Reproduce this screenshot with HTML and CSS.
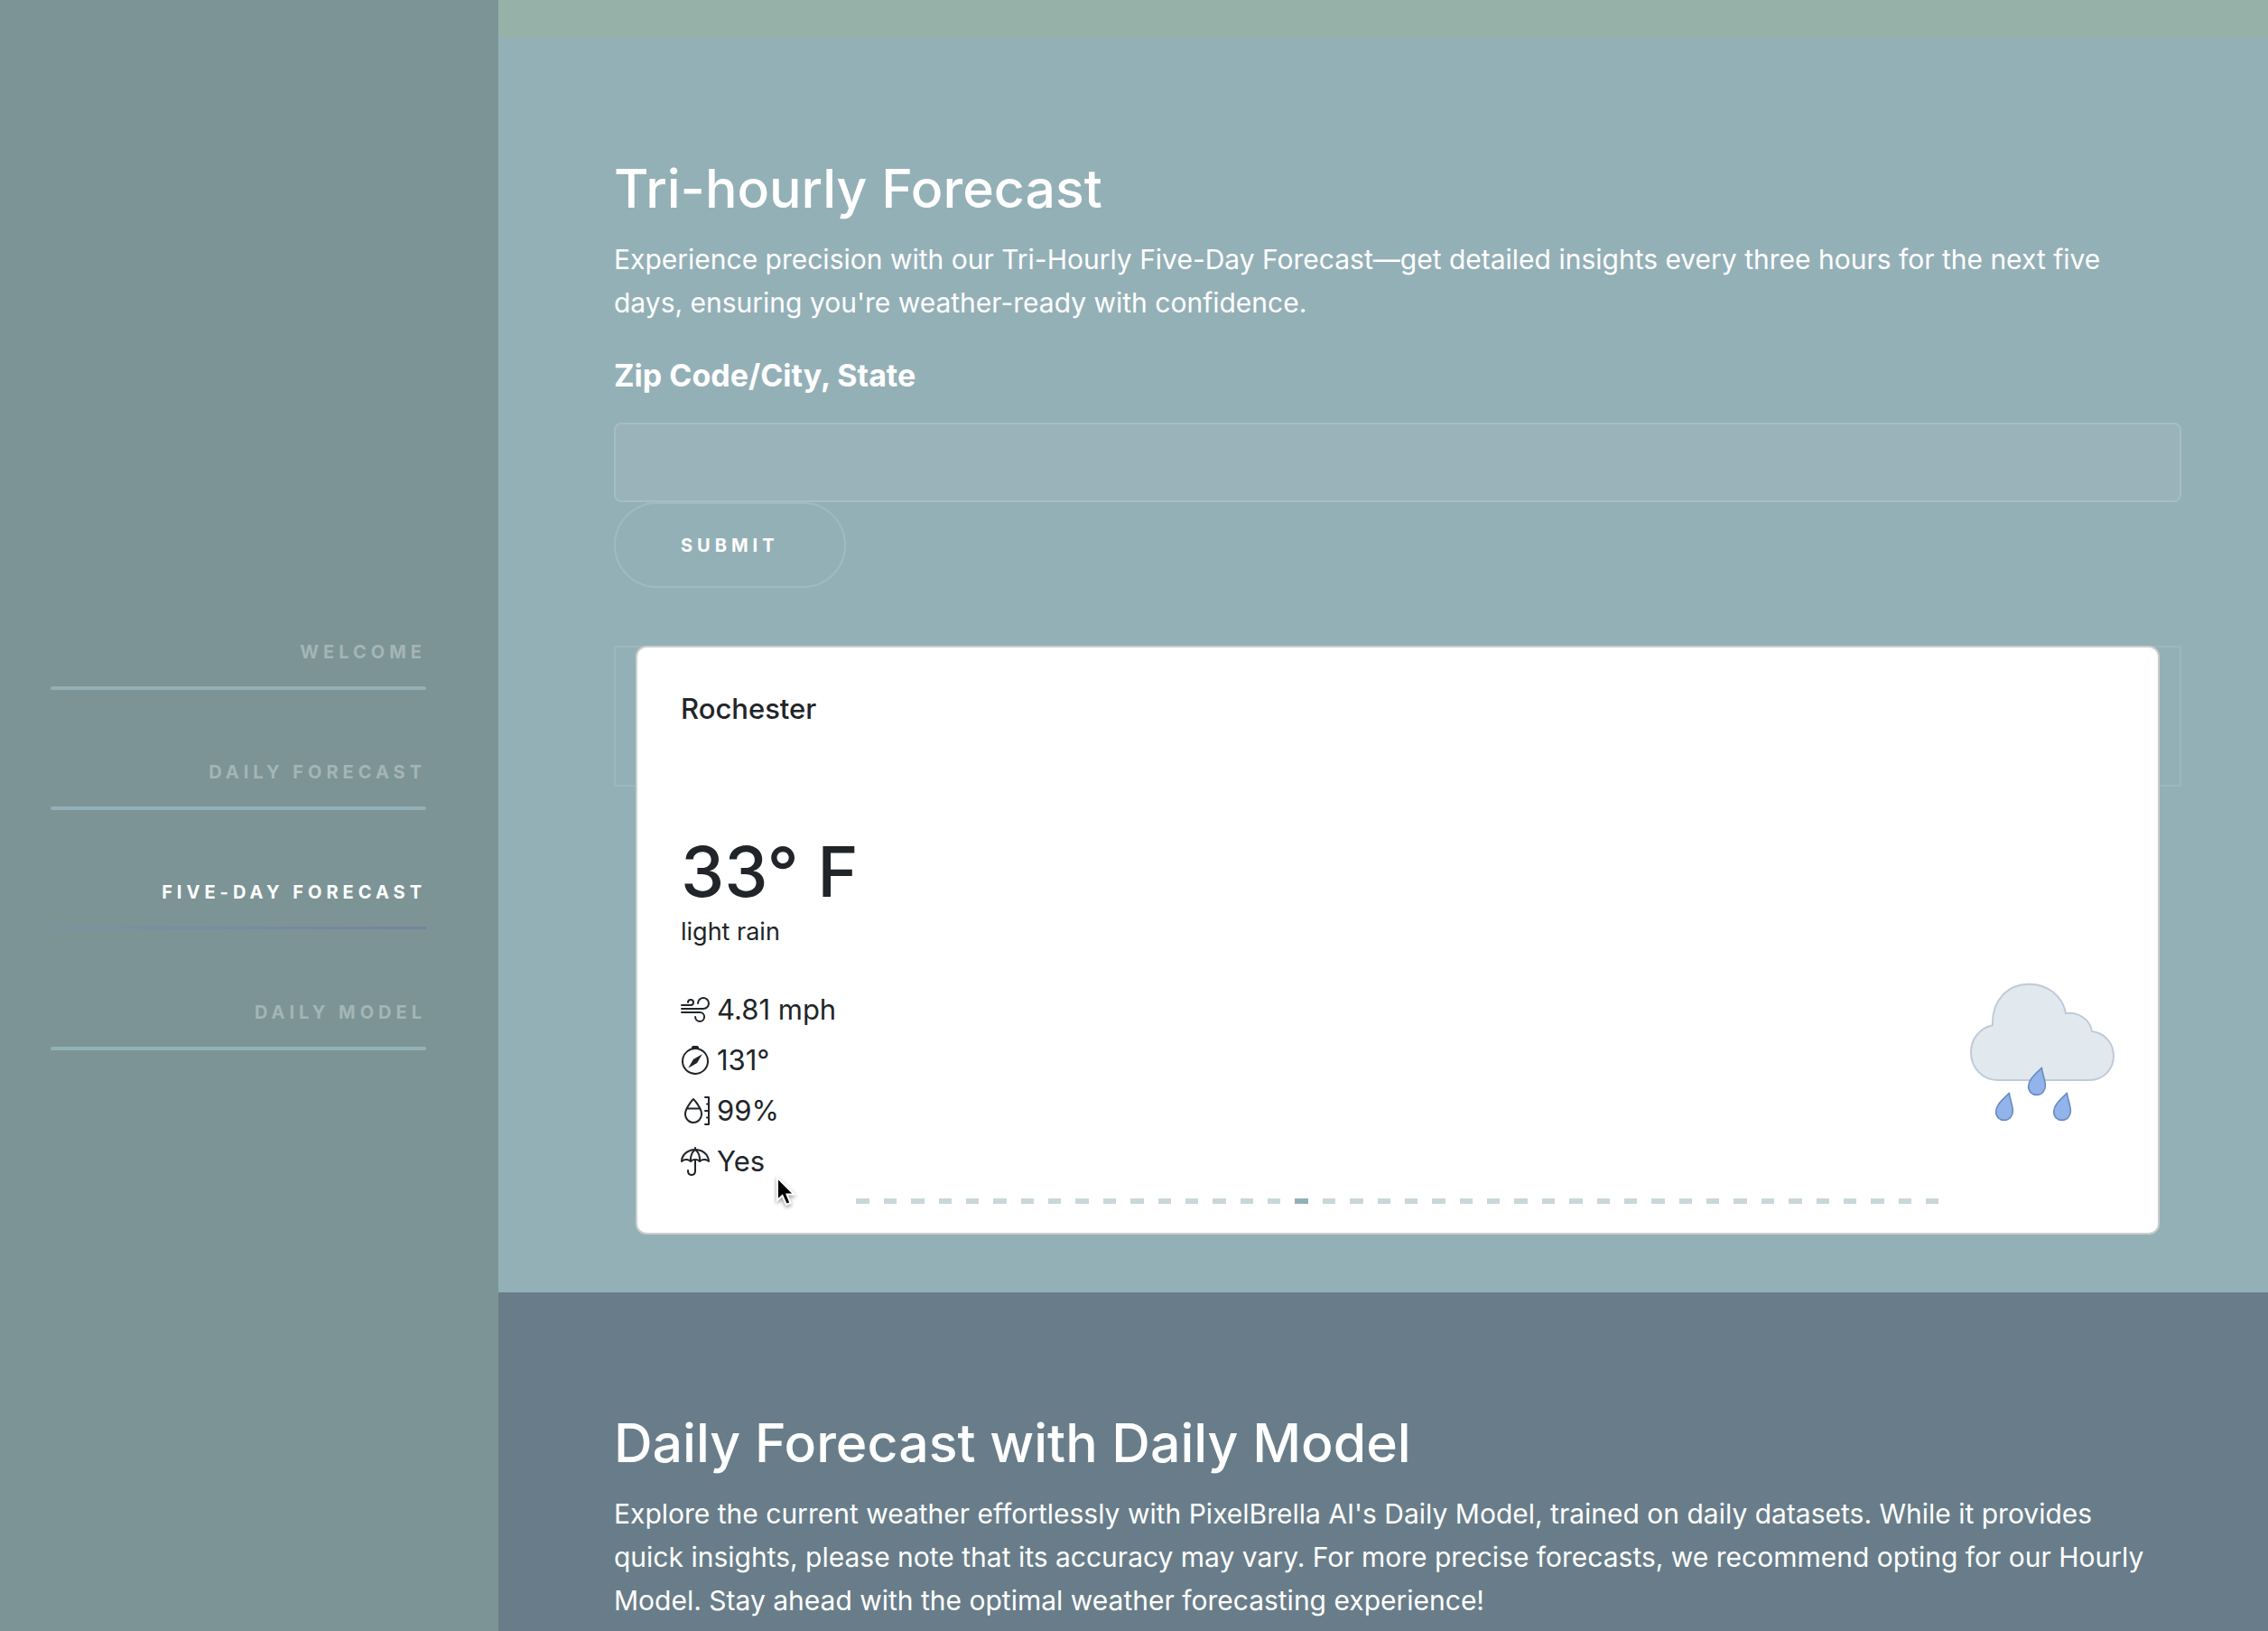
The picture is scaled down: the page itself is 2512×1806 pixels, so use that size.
FILE: index.html
```html
<!DOCTYPE html>
<html lang="en">
<head>
<meta charset="utf-8">
<title>PixelBrella AI</title>
<link rel="stylesheet" href="styles.css">
</head>
<body>
<div class="layout">
  <aside class="sidebar">
    <nav class="nav">
      <a class="nav-link" href="#welcome">Welcome</a>
      <a class="nav-link" href="#daily">Daily Forecast</a>
      <a class="nav-link active" href="#five-day">Five-Day Forecast</a>
      <a class="nav-link" href="#model">Daily Model</a>
    </nav>
  </aside>
  <main class="main">
    <div class="previous"></div>
    <section class="section five-day" id="five-day">
      <h2 class="title">Tri-hourly Forecast</h2>
      <p class="lead">Experience precision with our Tri-Hourly Five-Day Forecast—get detailed insights every three hours for the next five<br> days, ensuring you're weather-ready with confidence.</p>
      <form class="search">
        <label class="search-label" for="place">Zip Code/City, State</label>
        <input class="search-input" id="place" type="text">
        <button class="search-button" type="button">Submit</button>
      </form>
      <div class="results">
        <article class="card">
          <div class="card-info">
            <h3 class="city">Rochester</h3>
            <p class="temperature">33° F</p>
            <p class="conditions">light rain</p>
            <ul class="stats">
              <li class="stat">
                <svg class="stat-icon" viewBox="0 0 16 16" aria-hidden="true"><path d="M12.5 2A2.5 2.5 0 0 0 10 4.5a.5.5 0 0 1-1 0A3.5 3.5 0 1 1 12.5 8H.5a.5.5 0 0 1 0-1h12a2.5 2.5 0 0 0 0-5zm-7 1a1 1 0 0 0-1 1 .5.5 0 0 1-1 0 2 2 0 1 1 2 2h-5a.5.5 0 0 1 0-1h5a1 1 0 0 0 0-2zM0 9.5A.5.5 0 0 1 .5 9h10.042a3 3 0 1 1-3 3 .5.5 0 0 1 1 0 2 2 0 1 0 2-2H.5a.5.5 0 0 1-.5-.5z"/></svg>
                <span>4.81 mph</span>
              </li>
              <li class="stat">
                <svg class="stat-icon" viewBox="0 0 16 16" aria-hidden="true"><path d="M8 16.016a7.5 7.5 0 0 0 1.962-14.74A1 1 0 0 0 9 0H7a1 1 0 0 0-.962 1.276A7.5 7.5 0 0 0 8 16.016zm6.5-7.5a6.5 6.5 0 1 1-13 0 6.5 6.5 0 0 1 13 0z"/><path d="m6.94 7.44 4.95-2.83-2.83 4.95-4.949 2.83 2.828-4.95z"/></svg>
                <span>131°</span>
              </li>
              <li class="stat">
                <svg class="stat-icon" viewBox="0 0 16 16" aria-hidden="true"><path d="M13.5 0a.5.5 0 0 0 0 1H15v2.75h-.5a.5.5 0 0 0 0 1h.5V7.5h-1.5a.5.5 0 0 0 0 1H15v2.75h-.5a.5.5 0 0 0 0 1h.5V15h-1.5a.5.5 0 0 0 0 1h2a.5.5 0 0 0 .5-.5V.5a.5.5 0 0 0-.5-.5h-2zM7 1.5l.364-.343a.5.5 0 0 0-.728 0l-.002.002-.006.007-.022.023-.08.088a28.458 28.458 0 0 0-1.274 1.517c-.769.983-1.714 2.325-2.385 3.727C2.368 7.564 2 8.682 2 9.733 2 12.614 4.212 15 7 15s5-2.386 5-5.267c0-1.05-.368-2.169-.867-3.212-.671-1.402-1.616-2.744-2.385-3.727a28.458 28.458 0 0 0-1.354-1.605l-.022-.023-.006-.007-.002-.001L7 1.5zm0 0-.364-.343L7 1.5zm-.016.766L7 2.247l.016.019c.24.274.572.667.944 1.144.611.781 1.32 1.776 1.901 2.827H4.14c.58-1.051 1.29-2.046 1.9-2.827.373-.477.706-.87.945-1.144zM3 9.733c0-.755.244-1.612.638-2.496h6.724c.395.884.638 1.741.638 2.496C11 12.117 9.182 14 7 14s-4-1.883-4-4.267z"/></svg>
                <span>99%</span>
              </li>
              <li class="stat">
                <svg class="stat-icon" viewBox="0 0 16 16" aria-hidden="true"><path d="M8 0a.5.5 0 0 1 .5.5v.514C12.625 1.238 16 4.22 16 8c0 0 0 .5-.5.5-.149 0-.352-.145-.352-.145l-.004-.004-.025-.023a3.484 3.484 0 0 0-.555-.394A3.166 3.166 0 0 0 13 7.5c-.638 0-1.178.213-1.564.434a3.484 3.484 0 0 0-.555.394l-.025.023-.003.003s-.204.146-.353.146-.352-.145-.352-.145l-.004-.004-.025-.023a3.484 3.484 0 0 0-.555-.394 3.3 3.3 0 0 0-1.064-.39V13.5H8h.5v.039l-.005.083a2.958 2.958 0 0 1-.298 1.102 2.257 2.257 0 0 1-.763.88C7.06 15.851 6.587 16 6 16s-1.061-.148-1.434-.396a2.255 2.255 0 0 1-.763-.88 2.958 2.958 0 0 1-.302-1.185v-.025l-.001-.009v-.003s0-.002.5-.002h-.5V13a.5.5 0 0 1 1 0v.506l.003.044a1.958 1.958 0 0 0 .195.726c.095.191.23.367.423.495.19.127.466.229.879.229s.689-.102.879-.229c.193-.128.328-.304.424-.495a1.958 1.958 0 0 0 .197-.77V7.544a3.3 3.3 0 0 0-1.064.39 3.482 3.482 0 0 0-.58.417l-.004.004S5.65 8.5 5.5 8.5c-.149 0-.352-.145-.352-.145l-.004-.004a3.482 3.482 0 0 0-.58-.417A3.166 3.166 0 0 0 3 7.5c-.638 0-1.177.213-1.564.434a3.482 3.482 0 0 0-.58.417l-.004.004S.65 8.5.5 8.5C0 8.5 0 8 0 8c0-3.78 3.375-6.762 7.5-6.986V.5A.5.5 0 0 1 8 0zM6.577 2.123c-2.833.5-4.99 2.458-5.474 4.854A4.124 4.124 0 0 1 3 6.5c.806 0 1.48.25 1.962.511a9.706 9.706 0 0 1 .344-2.358c.242-.868.64-1.765 1.271-2.53zm-.615 4.93A4.16 4.16 0 0 1 8 6.5a4.16 4.16 0 0 1 2.038.553 8.688 8.688 0 0 0-.307-2.13C9.434 3.858 8.898 2.83 8 2.117c-.898.712-1.434 1.74-1.731 2.804a8.687 8.687 0 0 0-.307 2.131zm3.46-4.93c.631.765 1.03 1.662 1.272 2.53.233.833.328 1.66.344 2.358A4.14 4.14 0 0 1 13 6.5c.77 0 1.42.23 1.897.477-.484-2.396-2.641-4.355-5.474-4.854z"/></svg>
                <span>Yes</span>
              </li>
            </ul>
          </div>
          <svg class="weather" viewBox="126 84 480 462" role="img" aria-label="Light rain">
            <path class="cloud" d="M218 408C166 408 129 366 129 316C129 272 158 235 201 226C197 145 250 89 323 89C384 89 434 130 444 186C486 180 524 206 531 246C574 252 603 285 603 328C603 372 569 408 524 408Z"/>
            <path class="drop" d="M364 367C366 388 376 407 376 427C376 444 364 457 348 457C332 457 320 446 320 429C320 405 345 387 364 367Z"/>
            <path class="drop" d="M256 451C258 472 268 491 268 511C268 528 256 541 240 541C224 541 212 530 212 513C212 489 237 471 256 451Z"/>
            <path class="drop" d="M448 451C450 472 460 491 460 511C460 528 448 541 432 541C416 541 404 530 404 513C404 489 429 471 448 451Z"/>
          </svg>
        </article>
        <div class="indicators" aria-hidden="true">
          <i></i><i></i><i></i><i></i><i></i><i></i><i></i><i></i><i></i><i></i>
          <i></i><i></i><i></i><i></i><i></i><i></i><i class="current"></i><i></i><i></i><i></i>
          <i></i><i></i><i></i><i></i><i></i><i></i><i></i><i></i><i></i><i></i>
          <i></i><i></i><i></i><i></i><i></i><i></i><i></i><i></i><i></i><i></i>
        </div>
        <svg class="pointer" viewBox="0 0 24 36" aria-hidden="true"><path d="M2 3V28L7.500 23L12 33L16.500 31L12.500 21.500H20.500Z"/></svg>
      </div>
    </section>
    <section class="section model" id="model">
      <h2 class="title">Daily Forecast with Daily Model</h2>
      <p class="lead">Explore the current weather effortlessly with PixelBrella AI's Daily Model, trained on daily datasets. While it provides<br> quick insights, please note that its accuracy may vary. For more precise forecasts, we recommend opting for our Hourly<br> Model. Stay ahead with the optimal weather forecasting experience!</p>
    </section>
  </main>
</div>
</body>
</html>
```
FILE: styles.css
```css
*,
*::before,
*::after {
  box-sizing: border-box;
}

body,
h2,
h3,
p,
ul {
  margin: 0;
  padding: 0;
}

body {
  font-family: Inter, "Liberation Sans", sans-serif;
  font-size: 31px;
  line-height: 48px;
  color: #fff;
  background: #687d89;
}

.layout {
  display: grid;
  grid-template-columns: 552px 1fr;
  min-height: 100vh;
}

/* Side navigation */
.sidebar {
  background: #7c9495;
}

.nav {
  position: sticky;
  top: 0;
  display: flex;
  flex-direction: column;
  justify-content: center;
  gap: 12px;
  height: 100vh;
  padding: 0 80px 0 56px;
}

.nav-link {
  padding-top: 63px;
  font-size: 20px;
  font-weight: 700;
  line-height: 32px;
  letter-spacing: 5px;
  text-align: right;
  text-decoration: none;
  text-transform: uppercase;
  color: #a4b5b6;
}

.nav-link::after {
  content: "";
  display: block;
  height: 4px;
  margin-top: 22px;
  border-radius: 2px;
  background: #94b0b7;
}

.nav-link.active {
  color: #fff;
}

.nav-link.active::after {
  height: 3px;
  margin-bottom: 1px;
  background: linear-gradient(90deg, #7c93a3, #78829f);
}

/* Page sections */
.main {
  display: flex;
  flex-direction: column;
}

.previous {
  height: 42px;
  background: #96b1a8;
}

.section {
  padding: 128px 96px 0 128px;
}

.five-day {
  padding-bottom: 64px;
  background: #94b0b7;
}

.model {
  flex: 1;
  background: #687d89;
}

.title {
  margin-bottom: 15px;
  font-size: 59px;
  font-weight: 500;
  line-height: 78px;
}

.lead {
  font-size: 30px;
}

/* Search form */
.search {
  display: flex;
  flex-direction: column;
  align-items: flex-start;
  margin: 30px 0 64px;
}

.search-label {
  margin-bottom: 25px;
  font-size: 34px;
  font-weight: 700;
  line-height: 54px;
}

.search-input {
  width: 100%;
  height: 88px;
  padding: 0 32px;
  border: 2px solid #a5bec4;
  border-radius: 8px;
  background: #9ab2b9;
  color: #fff;
  font: inherit;
}

.search-button {
  height: 95px;
  padding: 0 72px;
  border: 2px solid #a2bac0;
  border-radius: 48px;
  background: transparent;
  color: #fff;
  font-family: inherit;
  font-size: 20px;
  font-weight: 700;
  letter-spacing: 5px;
  text-transform: uppercase;
}

/* Forecast carousel */
.results {
  position: relative;
  padding: 0 24px;
}

.results::before {
  content: "";
  position: absolute;
  top: 0;
  left: 0;
  right: 0;
  height: 156px;
  border: 2px solid #9db7bd;
}

.card {
  position: relative;
  display: flex;
  justify-content: space-between;
  align-items: flex-end;
  padding: 44px 48px 51px;
  border: 2px solid #cbcecd;
  border-radius: 12px;
  background: #fff;
  color: #212529;
}

.city {
  font-size: 31px;
  font-weight: 500;
  line-height: 48px;
}

.temperature {
  margin-top: 107px;
  font-size: 77px;
  font-weight: 500;
  line-height: 98px;
}

.conditions {
  font-size: 27px;
  line-height: 36px;
}

.stats {
  margin-top: 40px;
  list-style: none;
}

.stat {
  display: flex;
  align-items: center;
  gap: 8px;
  line-height: 56px;
}

.stat-icon {
  width: 32px;
  height: 32px;
  fill: currentColor;
}

.weather {
  width: 160px;
  height: 154px;
  margin-bottom: 72px;
}

.cloud {
  fill: #e1e9ef;
  stroke: #bfcad9;
  stroke-width: 6;
}

.drop {
  fill: #92b4eb;
  stroke: #6b8dc3;
  stroke-width: 5;
  stroke-linejoin: round;
}

.indicators {
  position: absolute;
  left: 15%;
  right: 15%;
  bottom: 34px;
  display: flex;
  gap: 16px;
  padding: 0 8px;
}

.indicators i {
  flex: 1;
  height: 6px;
  background: #c9d7da;
}

.indicators .current {
  background: #94b0b7;
}

.pointer {
  position: absolute;
  top: 586px;
  left: 179px;
  width: 24px;
  height: 36px;
  fill: #000;
  stroke: #fff;
  stroke-width: 2;
  filter: drop-shadow(0 2px 2px rgb(0 0 0 / 40%));
}
```
